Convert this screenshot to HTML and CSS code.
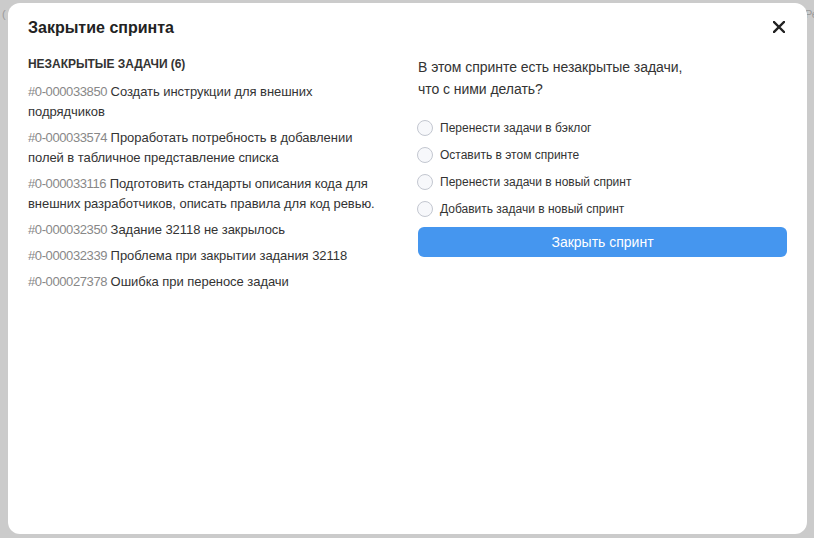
FILE: index.html
```html
<!DOCTYPE html>
<html lang="ru">
<head>
<meta charset="utf-8">
<title>Закрытие спринта</title>
<link rel="stylesheet" href="styles.css">
</head>
<body>
<div class="backdrop-text"><span>(</span><span>Ре</span></div>
<div class="modal">
  <div class="modal-head">
    <h1 class="title">Закрытие спринта</h1>
    <button class="close" aria-label="Закрыть">
      <svg width="12" height="12" viewBox="0 0 12 12"><path d="M1 1L11 11M11 1L1 11" stroke="#222" stroke-width="2.4" stroke-linecap="square" fill="none"/></svg>
    </button>
  </div>
  <div class="modal-body">
    <div class="tasks">
      <div class="tasks-head">НЕЗАКРЫТЫЕ ЗАДАЧИ (6)</div>
      <ul class="task-list">
        <li><span class="tid">#0-000033850</span> Создать инструкции для внешних подрядчиков</li>
        <li><span class="tid">#0-000033574</span> Проработать потребность в добавлении полей в табличное представление списка</li>
        <li><span class="tid">#0-000033116</span> Подготовить стандарты описания кода для внешних разработчиков, описать правила для код ревью.</li>
        <li><span class="tid">#0-000032350</span> Задание 32118 не закрылось</li>
        <li><span class="tid">#0-000032339</span> Проблема при закрытии задания 32118</li>
        <li><span class="tid">#0-000027378</span> Ошибка при переносе задачи</li>
      </ul>
    </div>
    <div class="actions">
      <p class="question">В этом спринте есть незакрытые задачи,<br>что с ними делать?</p>
      <label class="option"><span class="radio"></span>Перенести задачи в бэклог</label>
      <label class="option"><span class="radio"></span>Оставить в этом спринте</label>
      <label class="option"><span class="radio"></span>Перенести задачи в новый спринт</label>
      <label class="option"><span class="radio"></span>Добавить задачи в новый спринт</label>
      <button class="primary">Закрыть спринт</button>
    </div>
  </div>
</div>
</body>
</html>
```
FILE: styles.css
```css
* { box-sizing: border-box; }
html, body { margin: 0; padding: 0; }
body {
  background: #cbcbcb;
  font-family: "Liberation Sans", Arial, sans-serif;
  color: #333;
  width: 814px;
  height: 538px;
  overflow: hidden;
  position: relative;
}
.backdrop-text {
  position: absolute;
  top: 8px;
  left: 2px;
  right: -4px;
  display: flex;
  justify-content: space-between;
  font-size: 11px;
  color: #9a9a9a;
}
.modal {
  position: relative;
  margin: 3px 0 0 8px;
  width: 799px;
  height: 531px;
  background: #fff;
  border-radius: 12px;
  padding: 14px 20px 0 20px;
}
.modal-head {
  display: flex;
  justify-content: space-between;
  align-items: center;
  height: 22px;
}
.title {
  margin: 0;
  font-size: 16px;
  line-height: 22px;
  font-weight: bold;
  color: #222;
}
.close {
  border: 0;
  background: none;
  padding: 0;
  width: 12px;
  height: 12px;
  margin-right: 2px;
  margin-top: -3px;
  display: flex;
}
.modal-body {
  display: grid;
  grid-template-columns: 1fr 1fr;
  column-gap: 21px;
  margin-top: 17px;
}
.tasks { padding-right: 18px; }
.tasks-head {
  font-size: 12px;
  line-height: 16px;
  font-weight: bold;
  color: #333;
  letter-spacing: -0.05px;
}
.task-list {
  list-style: none;
  margin: 10px 0 0;
  padding: 0;
  display: flex;
  flex-direction: column;
  gap: 6px;
  font-size: 13px;
  line-height: 20px;
  color: #333;
  letter-spacing: -0.05px;
}
.tid { color: #888; letter-spacing: -0.4px; }
.actions {
  display: flex;
  flex-direction: column;
  gap: 9px;
}
.question {
  margin: 0 0 10px;
  font-size: 14px;
  line-height: 22px;
  color: #333;
  letter-spacing: -0.05px;
}
.option {
  display: flex;
  align-items: center;
  gap: 7px;
  height: 18px;
  font-size: 12px;
  color: #333;
  margin-left: -1px;
}
.radio {
  width: 16px;
  height: 16px;
  border-radius: 50%;
  border: 1px solid #c3c7d0;
  background: #f7f8fb;
  flex: none;
}
.primary {
  height: 30px;
  border: 0;
  border-radius: 6px;
  background: #4596ef;
  color: #fff;
  font-family: "Liberation Sans", Arial, sans-serif;
  font-size: 14px;
}
```
